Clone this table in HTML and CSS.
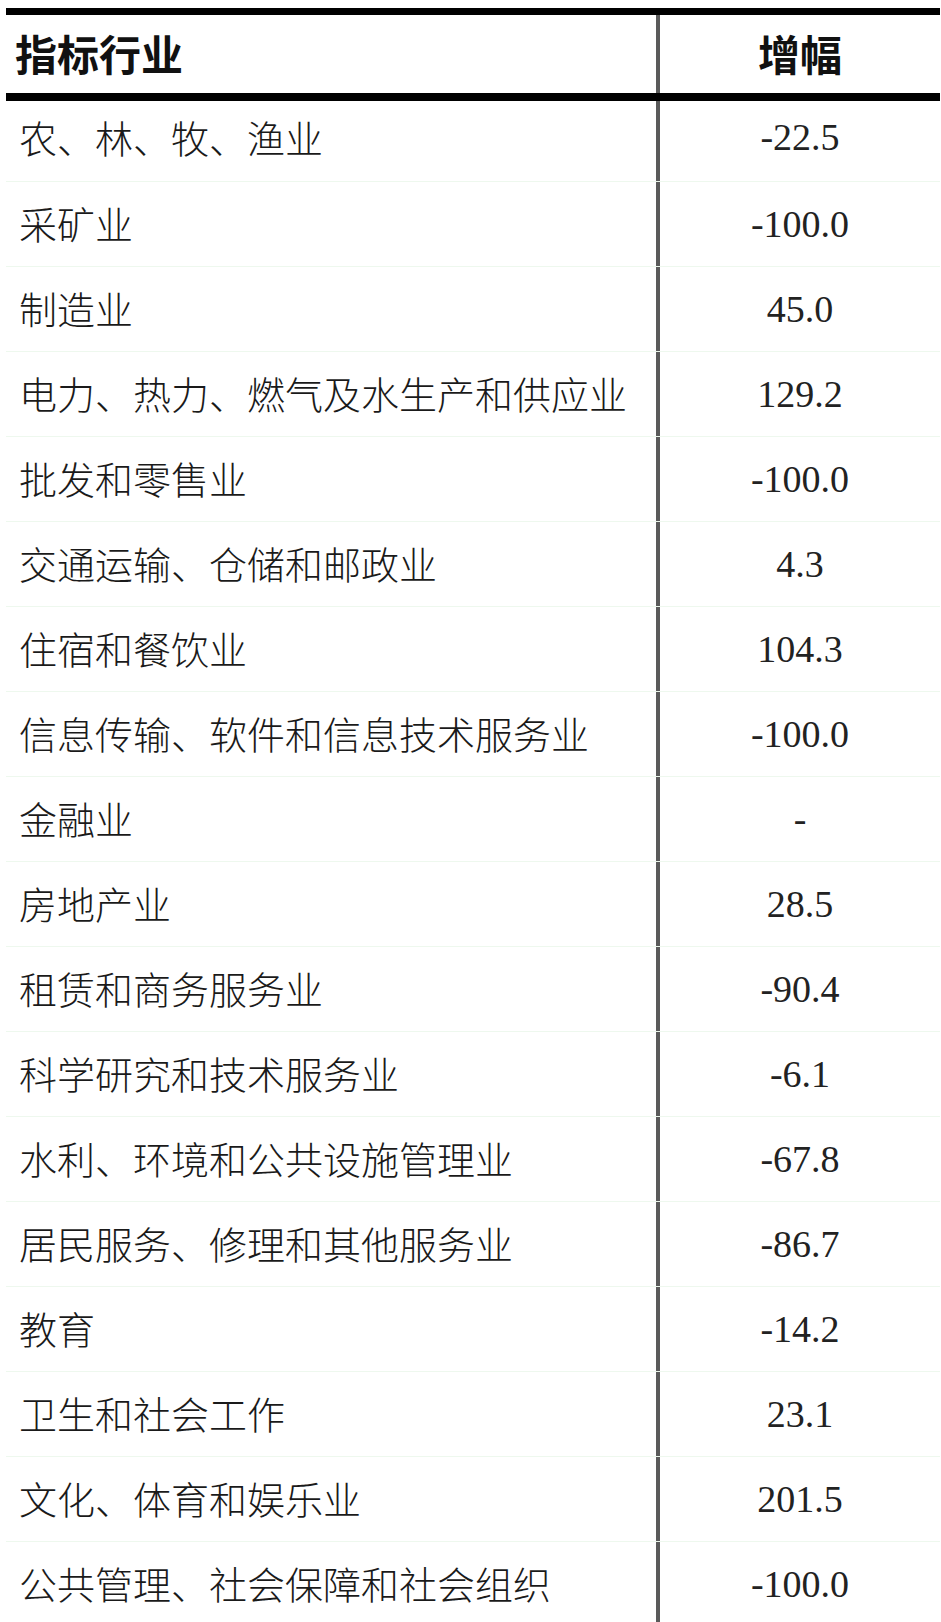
FILE: index.html
```html
<!DOCTYPE html>
<html lang="zh-CN">
<head>
<meta charset="utf-8">
<title>指标行业 增幅</title>
<link rel="stylesheet" href="styles.css">
</head>
<body>
<div class="sheet">
  <div class="row head">
    <div class="name">指标行业</div>
    <div class="val">增幅</div>
  </div>
  <div class="row first"><div class="name">农、林、牧、渔业</div><div class="val">-22.5</div></div>
  <div class="row"><div class="name">采矿业</div><div class="val">-100.0</div></div>
  <div class="row"><div class="name">制造业</div><div class="val">45.0</div></div>
  <div class="row"><div class="name">电力、热力、燃气及水生产和供应业</div><div class="val">129.2</div></div>
  <div class="row"><div class="name">批发和零售业</div><div class="val">-100.0</div></div>
  <div class="row"><div class="name">交通运输、仓储和邮政业</div><div class="val">4.3</div></div>
  <div class="row"><div class="name">住宿和餐饮业</div><div class="val">104.3</div></div>
  <div class="row"><div class="name">信息传输、软件和信息技术服务业</div><div class="val">-100.0</div></div>
  <div class="row"><div class="name">金融业</div><div class="val">-</div></div>
  <div class="row"><div class="name">房地产业</div><div class="val">28.5</div></div>
  <div class="row"><div class="name">租赁和商务服务业</div><div class="val">-90.4</div></div>
  <div class="row"><div class="name">科学研究和技术服务业</div><div class="val">-6.1</div></div>
  <div class="row"><div class="name">水利、环境和公共设施管理业</div><div class="val">-67.8</div></div>
  <div class="row"><div class="name">居民服务、修理和其他服务业</div><div class="val">-86.7</div></div>
  <div class="row"><div class="name">教育</div><div class="val">-14.2</div></div>
  <div class="row"><div class="name">卫生和社会工作</div><div class="val">23.1</div></div>
  <div class="row"><div class="name">文化、体育和娱乐业</div><div class="val">201.5</div></div>
  <div class="row"><div class="name">公共管理、社会保障和社会组织</div><div class="val">-100.0</div></div>
</div>
</body>
</html>
```
FILE: styles.css
```css
html, body {
  margin: 0;
  padding: 0;
  background: #ffffff;
}

.sheet {
  margin: 8px 1px 0 6px;
  border-top: 7px solid #000000;
  overflow: hidden;
}

.row {
  display: grid;
  grid-template-columns: 650px 1fr;
  height: 84px;
  border-bottom: 1px solid #eef8ee;
}

.name {
  display: flex;
  align-items: center;
  padding: 0 0 3px 13px;
  font-family: "Noto Sans CJK SC", "Noto Sans", sans-serif;
  font-weight: 300;
  font-size: 38px;
  line-height: 1;
  color: #1a1a1a;
  white-space: nowrap;
}

.val {
  display: flex;
  align-items: center;
  justify-content: center;
  border-left: 4px solid #5a5a5a;
  font-family: "Liberation Serif", "Times New Roman", serif;
  font-size: 38px;
  line-height: 1;
  color: #222222;
}

.head {
  height: 78px;
  border-bottom: 8px solid #000000;
}

.head .name,
.head .val {
  font-family: "Noto Sans CJK SC", "Noto Sans", sans-serif;
  font-weight: 700;
  font-size: 42px;
  color: #111111;
  padding-bottom: 2px;
}

.head .name {
  padding-left: 9px;
}

.first {
  height: 80px;
}

.first .name,
.first .val {
  padding-bottom: 8px;
}
```
